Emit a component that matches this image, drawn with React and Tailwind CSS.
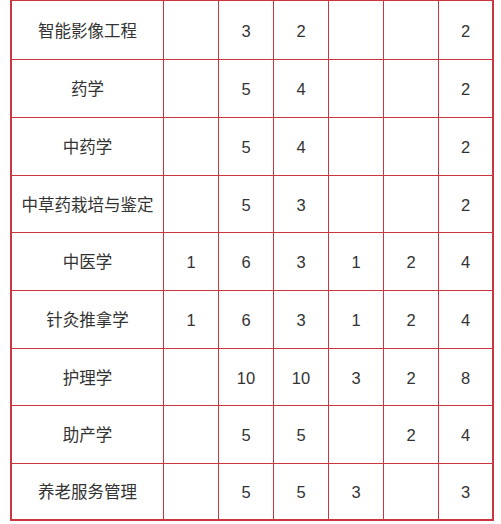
import React from 'react'

const rows = [
  { name: '智能影像工程', vals: ['', '3', '2', '', '', '2'], h: 'h-[59px]' },
  { name: '药学', vals: ['', '5', '4', '', '', '2'], h: 'h-[58px]' },
  { name: '中药学', vals: ['', '5', '4', '', '', '2'], h: 'h-[58px]' },
  { name: '中草药栽培与鉴定', vals: ['', '5', '3', '', '', '2'], h: 'h-[57px]' },
  { name: '中医学', vals: ['1', '6', '3', '1', '2', '4'], h: 'h-[58px]' },
  { name: '针灸推拿学', vals: ['1', '6', '3', '1', '2', '4'], h: 'h-[58px]' },
  { name: '护理学', vals: ['', '10', '10', '3', '2', '8'], h: 'h-[57px]' },
  { name: '助产学', vals: ['', '5', '5', '', '2', '4'], h: 'h-[58px]' },
  { name: '养老服务管理', vals: ['', '5', '5', '3', '', '3'], h: 'h-[55px]' },
]

export default function App() {
  return (
    <div className="w-[501px] h-[524px] bg-white pl-[10px]">
      <div
        className="w-[484px] border-l-2 border-r-2 border-b-2 border-t border-[#c9363f] text-[16.5px] text-[#333333]"
        style={{ fontFamily: '"Liberation Sans", "Noto Sans CJK SC", sans-serif' }}
      >
        {rows.map((r, i) => (
          <div
            key={r.name}
            className={`grid grid-cols-[152px_55px_55px_55px_55px_55px_53px] ${r.h} ${i < rows.length - 1 ? 'border-b border-[#c9363f]' : ''}`}
          >
            <div className="flex items-center justify-center pt-[2px] border-r border-[#c9363f] whitespace-nowrap">{r.name}</div>
            {r.vals.map((v, j) => (
              <div
                key={j}
                className={`flex items-center justify-center pt-[2px] ${j < 5 ? 'border-r border-[#c9363f]' : ''}`}
              >
                {v}
              </div>
            ))}
          </div>
        ))}
      </div>
    </div>
  )
}
